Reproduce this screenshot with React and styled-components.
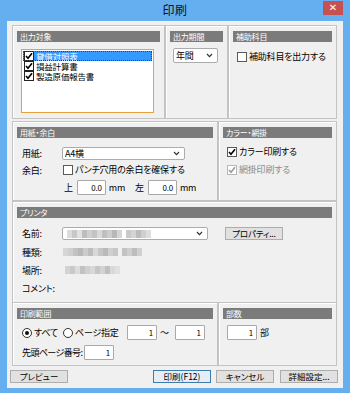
import React from 'react'
import styled, { createGlobalStyle } from 'styled-components'

const GlobalStyle = createGlobalStyle`
  html, body {
    margin: 0;
    padding: 0;
    background: #65aff0;
  }
  body {
    font-family: "Noto Sans CJK JP", "Noto Sans", sans-serif;
    font-feature-settings: "palt";
    color: #000;
  }
`

const Frame = styled.div`
  width: 350px;
  height: 393px;
  box-sizing: border-box;
  padding: 0 7px 5px;
  background: #65aff0;
  display: flex;
  flex-direction: column;
`

const TitleBar = styled.div`
  height: 21px;
  display: grid;
  grid-template-columns: 1fr auto 1fr;
  align-items: start;
`

const Title = styled.div`
  grid-column: 2;
  font-size: 12px;
  line-height: 20px;
  color: #111;
  letter-spacing: 0.5px;
`

const CloseButton = styled.div`
  grid-column: 3;
  justify-self: end;
  margin-top: 1px;
  width: 20px;
  height: 14px;
  background: #c75050;
  color: #fff;
  font-family: "DejaVu Sans", sans-serif;
  font-size: 10px;
  font-weight: bold;
  line-height: 14px;
  text-align: center;
`

const Client = styled.div`
  flex: 1;
  background: #f0f0f0;
  padding: 4px 6px 5px 5px;
  display: flex;
  flex-direction: column;
`

const Row = styled.div`
  display: grid;
  grid-template-columns: ${p => p.$cols};
  height: ${p => p.$h}px;
  margin-top: ${p => p.$mt || 0}px;
`

const Panel = styled.div`
  box-sizing: border-box;
  border: 1px solid #c3c3c3;
  box-shadow: inset 1px 1px 0 #fff;
  padding: 5px 4px;
  display: flex;
  flex-direction: column;
  align-items: flex-start;
  font-size: 9px;
  letter-spacing: -0.2px;
`

const PanelHeader = styled.div`
  align-self: stretch;
  height: 11px;
  background: #7b7b7b;
  color: #fff;
  font-size: 8px;
  line-height: 11px;
  padding-left: 3px;
`

const ListBox = styled.div`
  box-sizing: border-box;
  width: 133px;
  height: 64px;
  margin: 7px 0 0 4px;
  border: 1px solid #e9a23b;
  background: #fff;
  padding: 1px;
`

const ListItem = styled.div`
  height: 10px;
  display: flex;
  align-items: center;
  gap: 2px;
  padding-left: 1px;
  background: ${p => (p.$selected ? '#3399ff' : 'transparent')};
  color: ${p => (p.$selected ? '#fff' : '#000')};
  outline: ${p => (p.$selected ? '1px dotted #1b4a80' : 'none')};
  outline-offset: -1px;
`

const ItemText = styled.span`
  display: block;
  height: 10px;
  font-size: 8.5px;
  line-height: 10px;
  overflow: hidden;
`

const Box = styled.span`
  box-sizing: border-box;
  width: 10px;
  height: 10px;
  flex: none;
  border: 1px solid ${p => (p.$disabled ? '#b8b8b8' : p.$dark ? '#222' : '#5a5a5a')};
  background: #fff;
  display: inline-flex;
  align-items: center;
  justify-content: center;
`

const CheckRow = styled.div`
  display: flex;
  align-items: center;
  gap: 2px;
  margin-left: ${p => p.$ml || 0}px;
  margin-top: ${p => p.$mt || 0}px;
  color: ${p => (p.$disabled ? '#8c8c8c' : '#000')};
  line-height: 10px;
`

const SelectBox = styled.div`
  box-sizing: border-box;
  width: ${p => p.$w}px;
  height: ${p => p.$h}px;
  margin-left: ${p => p.$ml || 0}px;
  margin-top: ${p => p.$mt || 0}px;
  border: 1px solid #acacac;
  border-radius: 2px;
  background: #fff;
  display: flex;
  align-items: center;
  justify-content: space-between;
  padding: 0 4px 0 2px;
  font-size: 9px;
`

const FieldRow = styled.div`
  display: flex;
  align-items: center;
  height: ${p => p.$h}px;
  margin-top: ${p => p.$mt || 0}px;
  padding-left: 5px;
  white-space: nowrap;
`

const Label = styled.span`
  width: ${p => p.$w || 40}px;
  flex: none;
  letter-spacing: ${p => (p.$tight ? '-0.6px' : 'inherit')};
`

const NumInput = styled.span`
  box-sizing: border-box;
  width: ${p => p.$w || 30}px;
  height: 15px;
  margin-left: ${p => p.$ml || 0}px;
  border: 1px solid #a9a9a9;
  border-radius: 1px;
  background: #fff;
  display: inline-flex;
  align-items: center;
  justify-content: flex-end;
  padding-right: 3px;
  font-size: 8px;
  flex: none;
`

const Unit = styled.span`
  margin: 0 ${p => p.$mr || 0}px 0 ${p => p.$ml || 0}px;
`

const RadioGroup = styled.span`
  display: inline-flex;
  align-items: center;
  gap: 2px;
  width: ${p => p.$w}px;
  flex: none;
`

const RadioDot = styled.span`
  box-sizing: border-box;
  width: 10px;
  height: 10px;
  border-radius: 50%;
  border: 1px solid #333;
  background: #fff;
  display: inline-flex;
  align-items: center;
  justify-content: center;
  &::after {
    content: '';
    width: 4px;
    height: 4px;
    border-radius: 50%;
    background: ${p => (p.$on ? '#111' : 'transparent')};
  }
`

const Button = styled.div`
  box-sizing: border-box;
  width: 58px;
  height: 13px;
  border: 1px solid ${p => (p.$primary ? '#3d7bad' : '#adadad')};
  background: ${p => (p.$primary ? '#e5eef6' : '#e1e1e1')};
  font-size: 8.5px;
  line-height: 11px;
  text-align: center;
  margin-left: ${p => p.$ml || 0}px;
  flex: none;
`

const ButtonBar = styled.div`
  display: flex;
  align-items: center;
  margin: 6px -1px 0 -2px;
  & > :first-child {
    margin-right: auto;
  }
`

const Mosaic = styled.span`
  display: inline-flex;
  height: 8px;
  margin-left: ${p => p.$ml || 0}px;
`

const Tile = styled.span`
  width: ${p => p.$w}px;
  height: 8px;
  background: ${p => p.$c || 'transparent'};
`

const Check = ({ disabled }) => (
  <svg width="8" height="8" viewBox="0 0 8 8">
    <path d="M1 4 L3 6.3 L7 1.2" fill="none" stroke={disabled ? '#9a9a9a' : '#000'} strokeWidth="1.6" />
  </svg>
)

const Chevron = () => (
  <svg width="7" height="5" viewBox="0 0 7 5">
    <path d="M1 1 L3.5 3.6 L6 1" fill="none" stroke="#333" strokeWidth="1.2" />
  </svg>
)

const Blur = ({ shades, ml }) => (
  <Mosaic $ml={ml}>
    {shades.map((c, i) => (c ? <Tile key={i} $w={5} $c={c} /> : <Tile key={i} $w={4} />))}
  </Mosaic>
)

const nameShades = ['#dcdcdc', '#c8c8c8', '#e2e2e2', '#bdbdbd', '#cfcfcf', '#c4c4c4', '#dadada', '#bfbfbf', '#cdcdcd', '#b8b8b8', '#d6d6d6', null, '#c9c9c9', '#d4d4d4', '#bcbcbc', '#cfcfcf', '#dedede']
const typeShades = ['#d6d6d6', '#cfcfcf', '#c2c2c2', '#b8b8b8', '#cbcbcb', '#bdbdbd', '#d8d8d8', '#c5c5c5', '#b9b9b9', '#cfcfcf', '#c7c7c7', null, '#c3c3c3', '#cfcfcf', '#bdbdbd', '#d0d0d0']
const placeShades = ['#d3d3d3', '#c9c9c9', '#dcdcdc', '#c2c2c2', '#cfcfcf', '#d8d8d8', '#c6c6c6', '#d2d2d2', '#bfbfbf', '#d9d9d9', '#e0e0e0']

const targets = [
  { name: '貸借対照表', selected: true },
  { name: '損益計算書' },
  { name: '製造原価報告書' },
]

export default function App() {
  return (
    <>
      <GlobalStyle />
      <Frame>
        <TitleBar>
          <Title>印刷</Title>
          <CloseButton>✕</CloseButton>
        </TitleBar>
        <Client>
          <Row $cols="153px 63px 109px" $h={94}>
            <Panel>
              <PanelHeader>出力対象</PanelHeader>
              <ListBox>
                {targets.map(t => (
                  <ListItem key={t.name} $selected={t.selected}>
                    <Box $dark><Check /></Box>
                    <ItemText>{t.name}</ItemText>
                  </ListItem>
                ))}
              </ListBox>
            </Panel>
            <Panel>
              <PanelHeader>出力期間</PanelHeader>
              <SelectBox $w={45} $h={15} $ml={3} $mt={6}>
                年間
                <Chevron />
              </SelectBox>
            </Panel>
            <Panel>
              <PanelHeader>補助科目</PanelHeader>
              <CheckRow $ml={4} $mt={10}>
                <Box />
                補助科目を出力する
              </CheckRow>
            </Panel>
          </Row>

          <Row $cols="206px 119px" $h={78} $mt={2}>
            <Panel>
              <PanelHeader>用紙・余白</PanelHeader>
              <FieldRow $mt={9} $h={13}>
                <Label>用紙:</Label>
                <SelectBox $w={123} $h={13}>
                  A4横
                  <Chevron />
                </SelectBox>
              </FieldRow>
              <FieldRow $h={20}>
                <Label>余白:</Label>
                <CheckRow $ml={1}>
                  <Box />
                  パンチ穴用の余白を確保する
                </CheckRow>
              </FieldRow>
              <FieldRow $h={15}>
                <Label />
                <Unit $ml={2} $mr={4}>上</Unit>
                <NumInput $w={29}>0.0</NumInput>
                <Unit $ml={3} $mr={10}>mm</Unit>
                <Unit $mr={4}>左</Unit>
                <NumInput $w={29}>0.0</NumInput>
                <Unit $ml={3}>mm</Unit>
              </FieldRow>
            </Panel>
            <Panel>
              <PanelHeader>カラー・網掛</PanelHeader>
              <CheckRow $ml={4} $mt={9}>
                <Box><Check /></Box>
                カラー印刷する
              </CheckRow>
              <CheckRow $ml={4} $mt={8} $disabled>
                <Box $disabled><Check disabled /></Box>
                網掛印刷する
              </CheckRow>
            </Panel>
          </Row>

          <Row $cols="325px" $h={99} $mt={2}>
            <Panel>
              <PanelHeader>プリンタ</PanelHeader>
              <FieldRow $mt={8} $h={15}>
                <Label>名前:</Label>
                <SelectBox $w={146} $h={13}>
                  <Blur shades={nameShades} ml={2} />
                  <Chevron />
                </SelectBox>
                <Button $ml={17}>プロパティ...</Button>
              </FieldRow>
              <FieldRow $mt={2} $h={18}>
                <Label>種類:</Label>
                <Blur shades={typeShades} ml={1} />
              </FieldRow>
              <FieldRow $h={18}>
                <Label>場所:</Label>
                <Blur shades={placeShades} ml={3} />
              </FieldRow>
              <FieldRow $h={18}>
                <Label>コメント:</Label>
              </FieldRow>
            </Panel>
          </Row>

          <Row $cols="206px 119px" $h={62} $mt={2}>
            <Panel>
              <PanelHeader>印刷範囲</PanelHeader>
              <FieldRow $mt={6} $h={15}>
                <RadioGroup $w={41}>
                  <RadioDot $on />
                  すべて
                </RadioGroup>
                <RadioGroup $w={64}>
                  <RadioDot />
                  ページ指定
                </RadioGroup>
                <NumInput $w={30}>1</NumInput>
                <Unit $ml={3} $mr={6}>～</Unit>
                <NumInput $w={30}>1</NumInput>
              </FieldRow>
              <FieldRow $mt={5} $h={15}>
                <Label $w={62} $tight>先頭ページ番号:</Label>
                <NumInput $w={30}>1</NumInput>
              </FieldRow>
            </Panel>
            <Panel>
              <PanelHeader>部数</PanelHeader>
              <FieldRow $mt={6} $h={15}>
                <NumInput $w={30} $ml={-1}>1</NumInput>
                <Unit $ml={3}>部</Unit>
              </FieldRow>
            </Panel>
          </Row>

          <ButtonBar>
            <Button>プレビュー</Button>
            <Button $primary>印刷(F12)</Button>
            <Button $ml={5}>キャンセル</Button>
            <Button $ml={6}>詳細設定...</Button>
          </ButtonBar>
        </Client>
      </Frame>
    </>
  )
}
